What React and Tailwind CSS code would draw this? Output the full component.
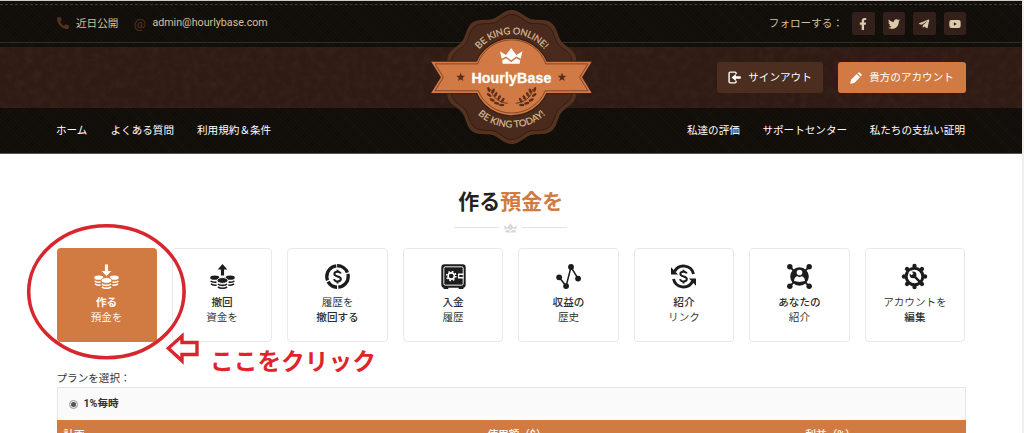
import React from "react";
import { FaPhone, FaFacebookF, FaTwitter, FaTelegramPlane, FaYoutube } from "react-icons/fa";

const CX = 511.7 - 428;
const CY = 69;

function scallop(radius, depth) {
  const points = [];
  for (let i = 0; i < 240; i++) {
    const a = (i / 240) * Math.PI * 2;
    const r = radius + depth * Math.cos(10 * a);
    points.push(`${(CX + r * Math.sin(a)).toFixed(2)},${(CY - r * Math.cos(a)).toFixed(2)}`);
  }
  return `M${points.join("L")}Z`;
}

function Star({ x }) {
  return (
    <path
      transform={`translate(${x} 69.3) scale(0.46)`}
      d="M0 -10 L2.6 -3.4 L9.5 -3.1 L4.1 1.3 L5.9 8.1 L0 4.2 L-5.9 8.1 L-4.1 1.3 L-9.5 -3.1 L-2.6 -3.4Z"
      fill="#5b2e1c"
    />
  );
}

function Laurel() {
  const leaves = [
    [-23, 12.5, 70], [-18.5, 14, 110], [-22.5, 18, 35], [-16, 17.5, 120], [-19.5, 23, 25], [-12.5, 20.5, 120], [-15, 26.3, 12], [-9, 23.2, 125], [-10, 28, 0],
  ];
  return (
    <g fill="#5b2e1c">
      <path d="M-21 12C-20 20 -13 25.5 -4 26.3" fill="none" stroke="#5b2e1c" strokeWidth="0.9" />
      {leaves.map(([x, y, r], i) => (
        <ellipse key={i} cx={x} cy={y} rx="2.7" ry="1.3" transform={`rotate(${r} ${x} ${y})`} />
      ))}
    </g>
  );
}

function Crown({ className }) {
  return (
    <svg viewBox="0 0 26 18" className={className} fill="currentColor">
      <path d="M1 4 L7.5 8 L13 0.5 L18.5 8 L25 4 L23 12 L18.5 9.5 L13 13.5 L7.5 9.5 L3 12Z" />
      <path d="M3.4 13.8 L7.5 11.5 L13 15.6 L18.5 11.5 L22.6 13.8 L22 17.2 H4Z" />
    </svg>
  );
}

function Emblem() {
  return (
    <svg width="168" height="140" viewBox="0 0 168 140" className="absolute left-[428px] top-[7px]">
      <defs>
        <path id="arcTop" d={`M${CX - 42.8} ${CY} A42.8 42.8 0 0 1 ${CX + 42.8} ${CY}`} />
        <path id="arcBottom" d={`M${CX - 50.5} ${CY} A50.5 50.5 0 0 0 ${CX + 50.5} ${CY}`} />
      </defs>
      <path d={scallop(64.1, 3)} fill="#54321f" />
      <path d={scallop(59.8, 2.8)} fill="#4a2a1c" stroke="#2c170f" strokeWidth="0.8" />
      <circle cx={CX} cy={CY} r="39.5" fill="#3a2016" />
      <path d="M2.5 52.8H164.5L155 69L164.5 85.8H2.5L12 69Z" fill="#3a2016" />
      <circle cx={CX} cy={CY} r="38.2" fill="#d17a45" />
      <path d="M3.2 53.7H163.6L154 69.3L163.6 85H3.2L13 69.3Z" fill="#d17a45" />
      <path
        d="M7 55.9H49.6A36.2 36.2 0 0 1 117.8 55.9H160L151.6 69.3L160 82.8H117.1A36.2 36.2 0 0 1 50.3 82.8H7L15.4 69.3Z"
        fill="none"
        stroke="#7c3f22"
        strokeWidth="0.9"
      />
      <Star x={32.7} />
      <Star x={134} />
      <text x={CX - 0.3} y="75" textAnchor="middle" textLength="80" lengthAdjust="spacing" fill="#fff" stroke="#fff" strokeWidth="0.3" className="font-['Liberation_Sans',sans-serif] text-[14.2px] font-bold">
        HourlyBase
      </text>
      <svg x={CX - 13} y="39.5" width="25" height="17" viewBox="0 0 26 18" fill="#fff">
        <path d="M1 4 L7.5 8 L13 0.5 L18.5 8 L25 4 L23 12 L18.5 9.5 L13 13.5 L7.5 9.5 L3 12Z" />
        <path d="M3.4 13.8 L7.5 11.5 L13 15.6 L18.5 11.5 L22.6 13.8 L22 17.2 H4Z" />
      </svg>
      <g transform={`translate(${CX} ${CY})`}>
        <Laurel />
        <g transform="scale(-1 1)">
          <Laurel />
        </g>
      </g>
      <g fill="#d6bd98" stroke="#d6bd98" strokeWidth="0.2" className="font-[Lato,sans-serif] text-[9.4px]">
        <text textAnchor="middle">
          <textPath href="#arcTop" startOffset="50%" textLength="74">BE KING ONLINE!</textPath>
        </text>
        <text textAnchor="middle">
          <textPath href="#arcBottom" startOffset="50%" textLength="74">BE KING TODAY!</textPath>
        </text>
      </g>
    </svg>
  );
}

function Coins({ up, cut }) {
  return (
    <>
      {up ? <path d="M12 0 L16.6 5.2 H13.5 V11 H10.5 V5.2 H7.4Z" /> : <path d="M12 11.5 L7.4 6.6 H10.5 V0.5 H13.5 V6.6 H16.6Z" />}
      <g fill="none" stroke="currentColor" strokeWidth="1.5">
        <path d="M0.6 16.2C1.5 17.4 4 17.7 6.2 17.4M0.9 19C2 20.2 4 20.5 6.4 20.2M23.4 16.2C22.5 17.4 20 17.7 17.8 17.4M23.1 19C22 20.2 20 20.5 17.6 20.2" />
        <path d="M7.6 19.2C9.5 21 14.5 21 16.4 19.2M7.6 22C9.5 23.8 14.5 23.8 16.4 22" />
      </g>
      <ellipse cx="4.6" cy="13.1" rx="4.4" ry="2" />
      <ellipse cx="19.4" cy="13.1" rx="4.4" ry="2" />
      <ellipse cx="12" cy="15.8" rx="5.2" ry="2.8" stroke={cut} strokeWidth="0.9" />
    </>
  );
}

const dollar = (
  <path
    d="M15.1 9.2C14.7 7.9 13.6 7.4 12 7.4C10.2 7.4 9 8.2 9 9.6C9 12.8 15.2 11.2 15.2 14.4C15.2 15.9 13.8 16.7 12 16.7C10.2 16.7 9 16 8.7 14.5M12 5.4V7.6M12 16.5V18.7"
    fill="none"
    stroke="currentColor"
    strokeWidth="1.9"
  />
);

const icons = {
  deposit: <Coins cut="#d17a41" />,
  withdraw: <Coins up cut="#ffffff" />,
  ring: (
    <>
      <circle cx="12" cy="12" r="10.3" fill="none" stroke="currentColor" strokeWidth="3.2" strokeDasharray="12.6 1.2 18 1.2 10.5 1.2 18.8 1.2" transform="rotate(-92 12 12)" />
      {dollar}
    </>
  ),
  safe: (
    <>
      <rect x="0.3" y="0.3" width="23.4" height="22.6" rx="3" />
      <path d="M2.5 22H7V24H2.5ZM17 22H21.5V24H17Z" />
      <rect x="2.7" y="2.7" width="18.6" height="17.6" rx="1.4" fill="none" stroke="#fff" strokeWidth="0.9" />
      <circle cx="9.8" cy="11.5" r="3" fill="none" stroke="#fff" strokeWidth="1.5" />
      <circle cx="9.8" cy="11.5" r="4.4" fill="none" stroke="#fff" strokeWidth="1.4" strokeDasharray="1.6 1.855" />
      <path d="M21.5 9.8H16.9V13.2H21.5" fill="none" stroke="#fff" strokeWidth="1.3" />
    </>
  ),
  graph: (
    <>
      <path d="M3 12.8L9.7 21.2L14.4 3L21.2 14" fill="none" stroke="currentColor" strokeWidth="1.5" />
      <circle cx="3" cy="12.8" r="2.8" />
      <circle cx="9.7" cy="21.2" r="2.8" />
      <circle cx="14.4" cy="2.9" r="2.8" />
      <circle cx="21.2" cy="14" r="2.8" />
    </>
  ),
  cycle: (
    <>
      <path d="M3.4 7.2A9.8 9.8 0 0 1 21.6 9.6M20.6 16.8A9.8 9.8 0 0 1 2.4 14.4" fill="none" stroke="currentColor" strokeWidth="2.8" />
      <path d="M0 3.2V10H6.8ZM24 20.8V14H17.2Z" />
      {dollar}
    </>
  ),
  network: (
    <>
      <path d="M2.6 2.6L21.4 21.4M21.4 2.6L2.6 21.4" stroke="currentColor" strokeWidth="1.8" />
      <circle cx="2.7" cy="2.7" r="2.6" />
      <circle cx="21.3" cy="2.7" r="2.6" />
      <circle cx="2.7" cy="21.3" r="2.6" />
      <circle cx="21.3" cy="21.3" r="2.6" />
      <circle cx="12" cy="12" r="8.9" />
      <circle cx="12" cy="8.2" r="2.7" fill="#fff" />
      <path d="M6.8 16.4C6.8 13.2 8.8 12 10 11.8L12 12.8L14 11.8C15.2 12 17.2 13.2 17.2 16.4Q12 18 6.8 16.4Z" fill="#fff" />
    </>
  ),
  wrench: (
    <>
      <circle cx="12" cy="12" r="8" fill="none" stroke="currentColor" strokeWidth="2.9" />
      <g>
        {[0, 45, 90, 135, 180, 225, 270, 315].map((angle) => (
          <circle key={angle} cx="12" cy="1.9" r="2.1" transform={`rotate(${angle} 12 12)`} />
        ))}
      </g>
      <path d="M11 11L17 17" stroke="currentColor" strokeWidth="2.4" strokeLinecap="round" />
      <circle cx="10.6" cy="10.4" r="3.3" />
      <path d="M6.2 8.2L8.2 6.2L11 9L9.2 10.8Z" fill="#fff" />
    </>
  ),
};

const cards = [
  { icon: "deposit", a: "作る", b: "預金を", bold: "a", active: true },
  { icon: "withdraw", a: "撤回", b: "資金を", bold: "a" },
  { icon: "ring", a: "履歴を", b: "撤回する", bold: "b" },
  { icon: "safe", a: "入金", b: "履歴", bold: "a" },
  { icon: "graph", a: "収益の", b: "歴史", bold: "a" },
  { icon: "cycle", a: "紹介", b: "リンク", bold: "a" },
  { icon: "network", a: "あなたの", b: "紹介", bold: "a" },
  { icon: "wrench", a: "アカウントを", b: "編集", bold: "b" },
];

function Card({ icon, a, b, bold, active }) {
  return (
    <a
      className={
        active
          ? "flex h-[94px] flex-col items-center rounded-[4px] bg-[#d17a41] pt-4 text-white"
          : "flex h-[94px] flex-col items-center rounded-[4px] border border-[#e9e9e9] bg-white pt-[15px] text-[#2c2c2c]"
      }
    >
      <svg viewBox="0 0 24 24" className={active ? "size-[25px] shrink-0 overflow-visible" : "size-[25px] shrink-0 overflow-visible text-[#1c1c1c]"} fill="currentColor">
        {icons[icon]}
      </svg>
      <div className="mt-[6px] text-center leading-[15.4px] whitespace-nowrap">
        <div className={bold === "a" ? (active ? "font-bold" : "font-medium") : "font-[350]"}>{a}</div>
        <div className={bold === "b" ? "font-medium" : "font-[350]"}>{b}</div>
      </div>
    </a>
  );
}

const socials = [FaFacebookF, FaTwitter, FaTelegramPlane, FaYoutube];
const weave =
  "bg-[#110e0a] bg-[repeating-linear-gradient(45deg,#15110d_0px,#15110d_1px,transparent_1px,transparent_3px)]";

export default function App() {
  return (
    <div className="relative flex h-[433px] w-[1024px] overflow-hidden bg-white font-[Roboto,'Noto_Sans_CJK_JP',sans-serif] text-[10.6px] text-[#333]">
      <div className="flex w-[1022px] shrink-0 flex-col">
        <header className="relative flex h-[154px] shrink-0 flex-col border-t border-b border-t-[#c9cac6] border-b-[#55534f]">
          <div className={`h-[4px] border-b border-dashed border-b-[#3b3a35] ${weave}`} />
          <div className={`flex h-[38px] items-center justify-between border-b border-b-[#332e25] pr-[56px] pl-[57px] text-[#d3c19d] ${weave}`}>
            <div className="flex items-center">
              <FaPhone className="size-3 -scale-x-100 text-[#56311f]" />
              <span className="ml-[7px]">近日公開</span>
              <span className="ml-[15px] w-[13px] text-center text-[13.5px] leading-none text-[#56311f]">@</span>
              <span className="ml-[6px] text-[10.7px]">admin@hourlybase.com</span>
            </div>
            <div className="flex items-center gap-[8px]">
              <span className="mr-px">フォローする：</span>
              {socials.map((Icon, i) => (
                <span key={i} className="flex size-[22.5px] items-center justify-center rounded-[2px] bg-[#33201a]">
                  <Icon className="size-3 text-[#dccbaa]" />
                </span>
              ))}
            </div>
          </div>
          <div className={`h-[4px] ${weave}`} />
          <div className="relative flex h-[61px] items-center justify-end gap-[15px] bg-[#2f1b14] pr-[56px]">
            <svg className="absolute inset-0 size-full opacity-45" aria-hidden="true">
              <filter id="leather">
                <feTurbulence type="fractalNoise" baseFrequency="0.12" numOctaves="4" seed="4" />
                <feColorMatrix values="0 0 0 0 0.06  0 0 0 0 0.03  0 0 0 0 0.02  1.4 0 0 0 -0.5" />
              </filter>
              <rect width="100%" height="100%" filter="url(#leather)" />
            </svg>
            <a className="relative flex h-[31px] w-[106px] items-center justify-center gap-[7px] rounded-[3px] bg-[#4b2e20] text-white">
              <svg viewBox="0 0 24 24" className="size-[13px]" fill="none" stroke="currentColor" strokeWidth="2.6">
                <path d="M15 6V4Q15 2 13 2H4Q2 2 2 4V20Q2 22 4 22H13Q15 22 15 20V18" />
                <path d="M23.5 12H13" strokeWidth="4.6" />
                <path d="M6.5 12L14.5 5.5V18.5Z" fill="currentColor" stroke="none" />
              </svg>
              サインアウト
            </a>
            <a className="relative flex h-[31px] w-[128px] items-center justify-center gap-[7px] rounded-[3px] bg-[#d27a43] text-white">
              <svg viewBox="0 0 24 24" className="size-[12px]" fill="currentColor">
                <path d="M0.5 23.5L2 15.5L13.5 4L20 10.5L8.5 22Z" />
                <path d="M15 2.5L17 0.8Q18 0 19 0.8L23.2 5Q24 6 23.2 7L21.5 9Z" />
              </svg>
              貴方のアカウント
            </a>
          </div>
          <nav className={`flex flex-1 items-center justify-between pr-[57px] pl-[56px] text-white ${weave}`}>
            <div className="flex gap-[23px]">
              <a>ホーム</a>
              <a>よくある質問</a>
              <a>利用規約＆条件</a>
            </div>
            <div className="flex gap-[22.5px]">
              <a>私達の評価</a>
              <a>サポートセンター</a>
              <a>私たちの支払い証明</a>
            </div>
          </nav>
          <Emblem />
        </header>

        <main className="flex flex-1 flex-col pt-[33px] pr-[57px] pl-[56.5px]">
          <h1 className="text-center text-[21px] leading-[30px] font-bold text-[#222]">
            作る<span className="text-[#d17a41]">預金を</span>
          </h1>
          <div className="mt-[5.5px] flex items-center justify-center gap-[4px]">
            <span className="h-px w-[45px] bg-[#e3e3e3]" />
            <Crown className="h-[10px] w-[15px] text-[#d9d9d9]" />
            <span className="h-px w-[45px] bg-[#e3e3e3]" />
          </div>
          <div className="mt-[15px] grid grid-cols-8 gap-[15.3px]">
            {cards.map((card) => (
              <Card key={card.icon} {...card} />
            ))}
          </div>
          <div className="mt-[29px] leading-4">プランを選択：</div>
          <div className="mt-[0.5px] w-[909px] border border-b-0 border-[#e6e6e6] bg-[#fafafa]">
            <label className="flex h-[32px] items-center gap-[6px] pl-[11px] font-bold">
              <span className="flex size-[9px] items-center justify-center rounded-full border border-[#999] bg-[#eee]">
                <span className="size-[5px] rounded-full bg-[#555]" />
              </span>
              1%毎時
            </label>
          </div>
          <div className="grid w-[909px] grid-cols-[424px_318px_1fr] bg-[#d17a41] pt-[7px] pb-4 pl-[7px] leading-4 font-medium text-white">
            <span>計画</span>
            <span>使用額（$）</span>
            <span>利益（%）</span>
          </div>
        </main>
      </div>
      <div className="w-[2px] bg-[#efefef]" />

      <svg className="absolute top-[215px] left-0" width="210" height="155" viewBox="0 215 210 155" fill="none" stroke="#d7262d">
        <ellipse cx="106.4" cy="291.8" rx="77.7" ry="66" strokeWidth="3.6" />
        <path d="M168.3 348.2L182 336V342.5H197V354.5H182V360.8Z" strokeWidth="3.4" />
      </svg>
      <div className="absolute top-[345px] left-[210px] text-[23.7px] leading-[34px] font-bold whitespace-nowrap text-[#e0242b]">ここをクリック</div>
    </div>
  );
}
